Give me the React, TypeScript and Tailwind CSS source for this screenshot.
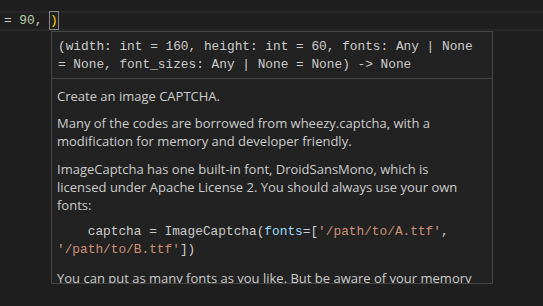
import React from "react";

const mono = { fontFamily: '"Liberation Mono", "DejaVu Sans Mono", monospace' };
const sans = { fontFamily: '"Open Sans", "Noto Sans", sans-serif' };

export default function App() {
  return (
    <div className="relative w-[543px] h-[306px] overflow-hidden bg-[#1f1f1f]">
      {/* editor lines */}
      <div className="h-[11px]" />
      <div
        className="h-[20px] border-y-2 border-[#282828] flex items-center pl-[4px] text-[12.8px] leading-[16px] text-[#cccccc] whitespace-pre"
        style={mono}
      >
        <span>= </span>
        <span className="text-[#b5cea8]">90</span>
        <span>, </span>
        <span className="text-[#ffd700] outline outline-1 outline-[#888888] h-[17px] leading-[17px] -mt-[1px]">)</span>
      </div>

      {/* hover widget */}
      <div className="absolute left-[51px] top-[31px] w-[442px] h-[253px] border border-[#454545] bg-[#222222] overflow-hidden">
        <div
          className="px-[6px] pt-[6px] pb-[4px] text-[12.8px] leading-[18px] text-[#cccccc] whitespace-pre"
          style={mono}
        >
          <div>(width: int = 160, height: int = 60, fonts: Any | None</div>
          <div>= None, font_sizes: Any | None = None) -&gt; None</div>
        </div>
        <div className="h-px bg-[#454545]" />
        <div className="pl-[5px] pr-[6px] pt-[8px] text-[13px] leading-[18px] text-[#cccccc]" style={sans}>
          <p>Create an image CAPTCHA.</p>
          <p className="mt-[9px]">
            Many of the codes are borrowed from wheezy.captcha, with a
            <br />
            modification for memory and developer friendly.
          </p>
          <p className="mt-[10px]">
            ImageCaptcha has one built-in font, DroidSansMono, which is
            <br />
            licensed under Apache License 2. You should always use your own
            <br />
            fonts:
          </p>
          <div className="mt-[9px] text-[12.8px] leading-[18px] whitespace-pre" style={mono}>
            <div>
              {"    captcha = ImageCaptcha("}
              <span className="text-[#9cdcfe]">fonts</span>
              {"=["}
              <span className="text-[#ce9178]">'/path/to/A.ttf'</span>
              {","}
            </div>
            <div>
              <span className="text-[#ce9178]">'/path/to/B.ttf'</span>
              {"])"}
            </div>
          </div>
          <p className="mt-[10px] whitespace-nowrap">
            You can put as many fonts as you like. But be aware of your memory
          </p>
        </div>
      </div>
    </div>
  );
}
